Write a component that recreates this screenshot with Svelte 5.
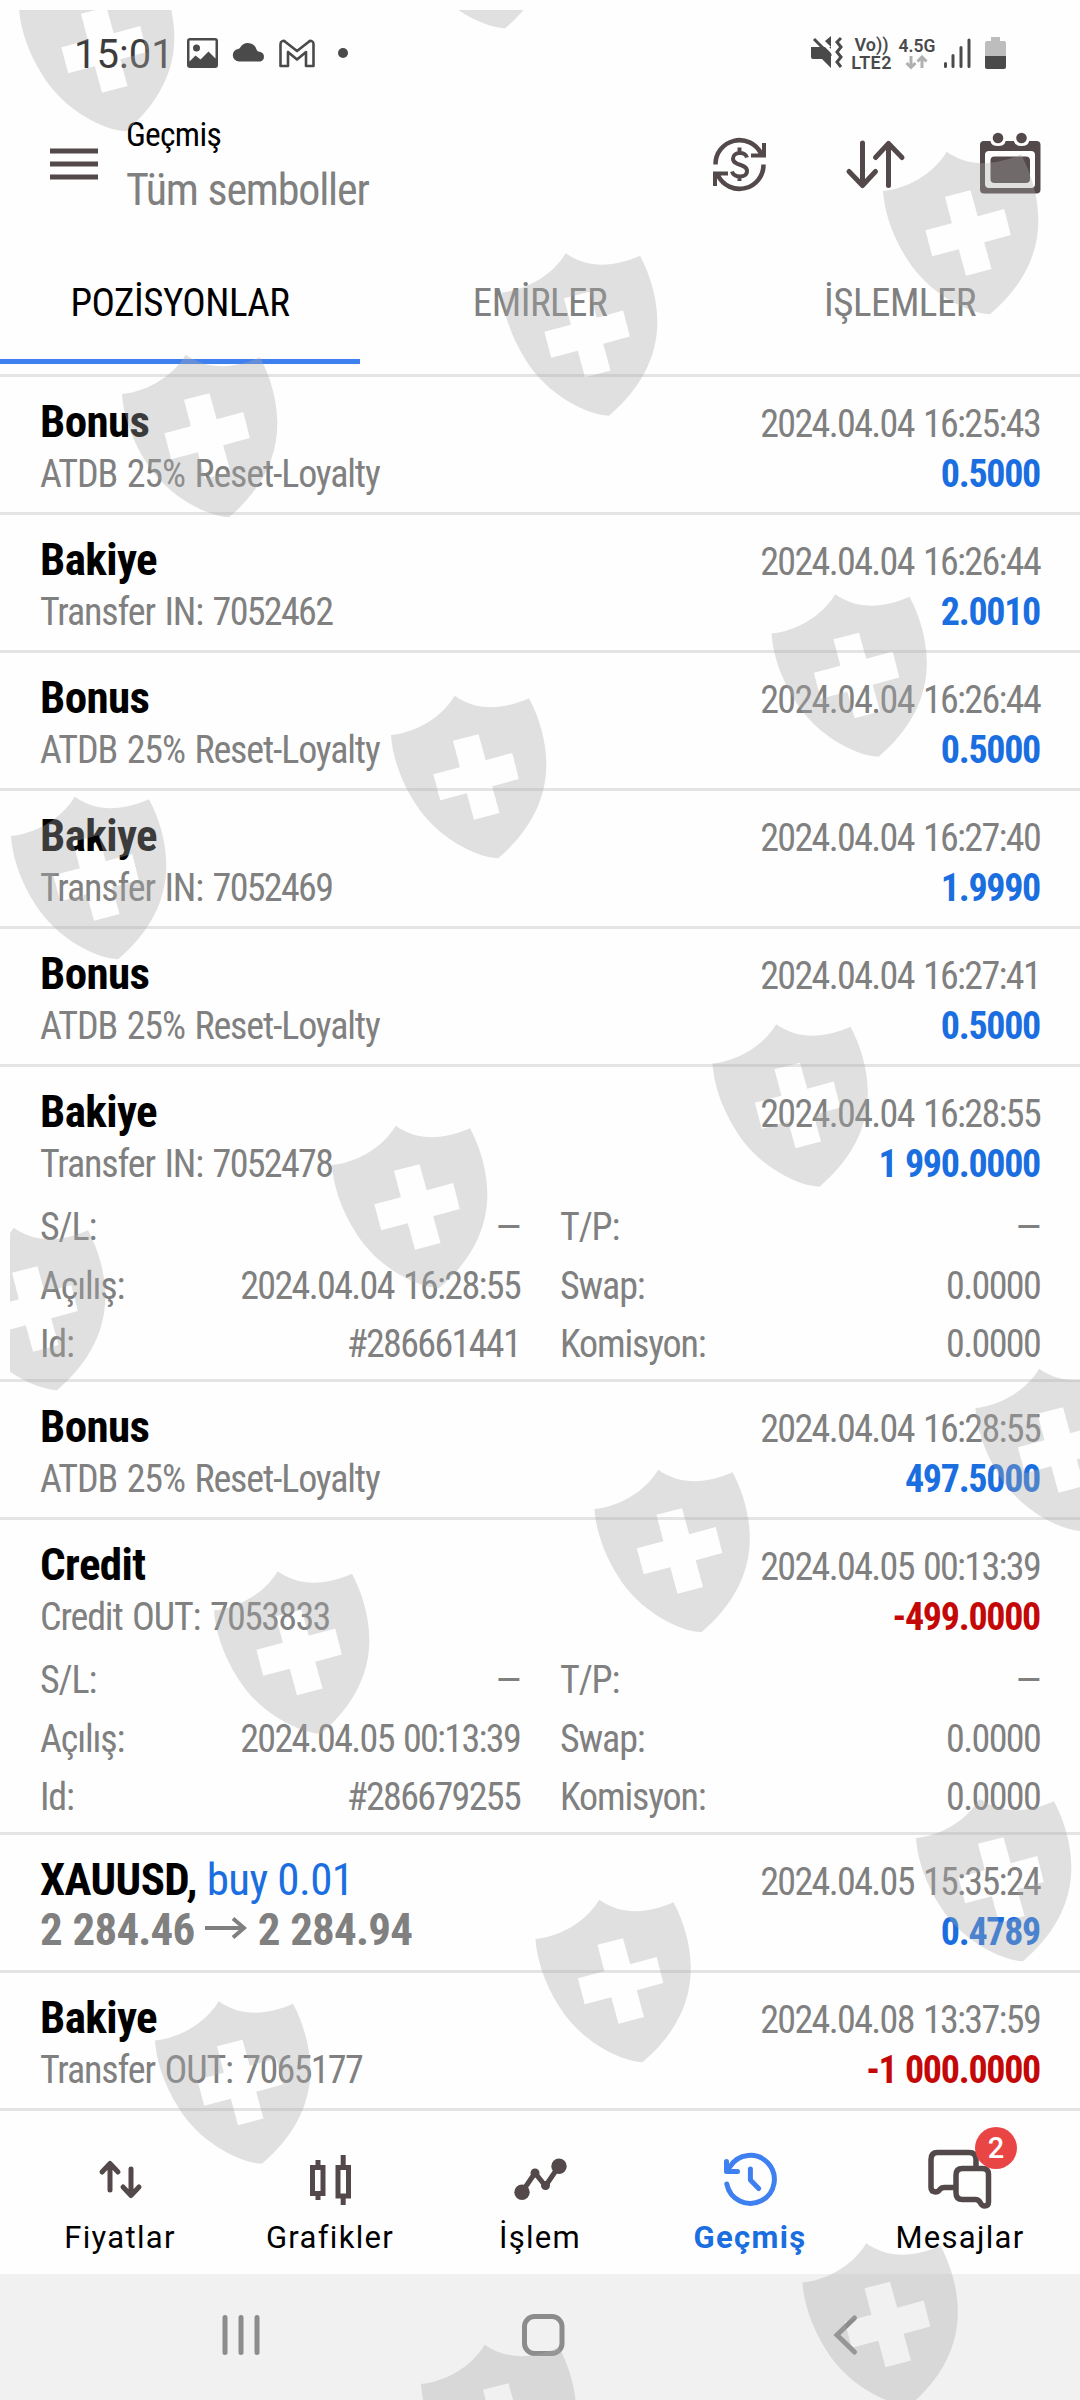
<script lang="ts">
  type Deal = {
    title: string;
    side?: string;
    note?: string;
    ref?: string;
    from?: string;
    to?: string;
    time: string;
    profit: string;
    id?: string;
  };

  const tabs = ["POZİSYONLAR", "EMİRLER", "İŞLEMLER"];
  const activeTab = 0;

  const deals: Deal[] = [
    { title: "Bonus", note: "ATDB 25% Reset-Loyalty", time: "2024.04.04 16:25:43", profit: "0.5000" },
    { title: "Bakiye", note: "Transfer IN:", ref: "7052462", time: "2024.04.04 16:26:44", profit: "2.0010" },
    { title: "Bonus", note: "ATDB 25% Reset-Loyalty", time: "2024.04.04 16:26:44", profit: "0.5000" },
    { title: "Bakiye", note: "Transfer IN:", ref: "7052469", time: "2024.04.04 16:27:40", profit: "1.9990" },
    { title: "Bonus", note: "ATDB 25% Reset-Loyalty", time: "2024.04.04 16:27:41", profit: "0.5000" },
    { title: "Bakiye", note: "Transfer IN:", ref: "7052478", time: "2024.04.04 16:28:55", profit: "1 990.0000", id: "#286661441" },
    { title: "Bonus", note: "ATDB 25% Reset-Loyalty", time: "2024.04.04 16:28:55", profit: "497.5000" },
    { title: "Credit", note: "Credit OUT:", ref: "7053833", time: "2024.04.05 00:13:39", profit: "-499.0000", id: "#286679255" },
    { title: "XAUUSD,", side: "buy 0.01", from: "2 284.46", to: "2 284.94", time: "2024.04.05 15:35:24", profit: "0.4789" },
    { title: "Bakiye", note: "Transfer OUT:", ref: "7065177", time: "2024.04.08 13:37:59", profit: "-1 000.0000" },
  ];

  // left corner of every shield
  const shields = [
    [19, 8], [398, -95],
    [122, 394], [502, 292.5], [883, 191],
    [11, 836], [391, 735], [771.5, 633.5],
    [-50, 1267], [332, 1165], [712.5, 1063.5],
    [214, 1610.5], [594.5, 1509], [975.5, 1408],
    [155, 2040.5], [535.5, 1939], [916, 1838],
    [421, 2384], [802.5, 2282.5],
  ];
</script>

<div class="screen">
  <div class="status">
    <span class="clock">15:01</span>
    <svg class="left-icons" width="170" height="40" viewBox="184 33 170 40">
      <path fill="#4a4a4a" fill-rule="evenodd" d="M190 38h25a3 3 0 0 1 3 3v24a3 3 0 0 1-3 3h-25a3 3 0 0 1-3-3v-24a3 3 0 0 1 3-3zM189.500 40.500v21l6-6 5 4 8-8 7 7v-18zM196.500 44.500a3.500 3.500 0 1 1 0 7 3.500 3.500 0 0 1 0-7z" />
      <path fill="#4a4a4a" d="M239 61.500a6.300 6.300 0 0 1-1-12.500c2-1 1.500 0 2.500-2a9 9 0 0 1 16 2.500c2 3 1 1.500 4 2.500a5 5 0 0 1 0 9.500z" />
      <path fill="none" stroke="#4a4a4a" stroke-width="2.600" stroke-linejoin="round" d="M280.500 66V44c0-3 3-4 5-2l11.500 9 11.500-9c2-2 5-1 5 2v22h-7.500V52l-9 7.500-9-7.500v14z" />
      <circle cx="343" cy="53" r="5" fill="#4a4a4a" />
    </svg>
    <div class="status-right">
      <svg width="34" height="36" viewBox="811 35 34 36">
        <path fill="#4a4a4a" d="M812 47h7l13 0v21l-9-9h-9q-2 0-2-2zM826 41l6-5v11z" />
        <path fill="none" stroke="#fefefe" stroke-width="3" d="M818 37l15 15" />
        <path fill="none" stroke="#4a4a4a" stroke-width="3" d="M815 39l17 17M842 38l-4 4 4 5-4 5 4 5-4 5 4 5" />
      </svg>
      <div class="volte"><span>Vo))</span><span>LTE2</span></div>
      <div class="net">
        <span>4.5G</span>
        <svg width="26" height="15" viewBox="905 56 26 15">
          <path fill="none" stroke="#b0b0b0" stroke-width="3" d="M912 57v11M907.500 64l4.500 4.500 4.500-4.500M923 69V59M918.500 62.500l4.500-4.500 4.500 4.500" />
        </svg>
      </div>
      <svg width="66" height="36" viewBox="942 35 66 36">
        <path stroke="#4a4a4a" stroke-width="3" stroke-linecap="round" d="M945.500 66.500v-3M953 66.500v-11M961 66.500v-19M969 66.500V40" />
        <path fill="#bdbdbd" d="M991 41v-4h9v4h4a2 2 0 0 1 2 2v13h-21V43a2 2 0 0 1 2-2z" />
        <path fill="#4a4a4a" d="M985 56h21v11a2 2 0 0 1-2 2h-17a2 2 0 0 1-2-2z" />
      </svg>
    </div>
  </div>

  <header>
    <svg class="menu" width="48" height="34" viewBox="0 0 48 34">
      <path stroke="#54494a" stroke-width="5" d="M0 4h48M0 17h48M0 30h48" />
    </svg>
    <div class="heading">
      <h1>Geçmiş</h1>
      <p>Tüm semboller</p>
    </div>
    <svg class="actions" width="332" height="66" viewBox="712 130 332 66">
      <g fill="none" stroke="#54494a" stroke-width="5">
        <path stroke-width="4.500" d="M715.500 164.500a24 24 0 0 1 45.500-11M763.500 164.500a24 24 0 0 1-45.500 11" />
        <path stroke-width="4" d="M764 143v12.500h-13M715 186v-12.500h13" />
        <path stroke-width="4" d="M747 157.500c-1.500-6.500-14-6-14 1 0 8 14 4.500 14 12.500 0 7.500-13.500 7-15 .5M739.500 147.500v5M739.500 176v5" />
        <path stroke-linecap="round" stroke-linejoin="round" d="M862.500 143v42M849 171.500l13.500 14 13-14M888.500 185.500v-42M875.500 157.500l13-14 13.500 14" />
      </g>
      <path fill="#54494a" d="M764 149v8h-8zM715 181v-8h8z" />
      <path fill="#54494a" fill-rule="evenodd" d="M984 141h52.500a4 4 0 0 1 4 4v44.500a4 4 0 0 1-4 4h-52.500a4 4 0 0 1-4-4V145a4 4 0 0 1 4-4zM989 151a4 4 0 0 0-4 4v29a4 4 0 0 0 4 4h42a4 4 0 0 0 4-4v-29a4 4 0 0 0-4-4z" />
      <rect x="990.500" y="156.500" width="39.500" height="26.500" rx="4" fill="#54494a" />
      <path fill="#fefefe" d="M990.500 138h15v3.500q-1 4.500-7.500 4.500t-7.500-4.500zM1014 138h15v3.500q-1 4.500-7.500 4.500t-7.500-4.500z" />
      <circle cx="998" cy="138" r="5.300" fill="#54494a" />
      <circle cx="1021.500" cy="138" r="5.300" fill="#54494a" />
    </svg>
  </header>

  <nav class="tabs">
    {#each tabs as tab, i}
      <div class="tab" class:active={i === activeTab}>{tab}</div>
    {/each}
  </nav>

  <main>
    {#each deals as deal}
      <section class="deal">
        <div class="line first">
          <span class="title">{deal.title}{#if deal.side}{" "}<span class="side">{deal.side}</span>{/if}</span>
          <span class="gray num">{deal.time}</span>
        </div>
        <div class="line second">
          {#if deal.from}
            <span class="price">
              {deal.from}
              <svg width="42" height="22" viewBox="0 0 42 22">
                <path fill="none" stroke="#808080" stroke-width="4" d="M0 11h39M28 1.500l11 9.500-11 9.500" />
              </svg>
              {deal.to}
            </span>
          {:else}
            <span class="gray">{deal.note}{#if deal.ref}{" "}<span class="num">{deal.ref}</span>{/if}</span>
          {/if}
          <span class="profit" class:loss={deal.profit.startsWith("-")}>{deal.profit}</span>
        </div>
        {#if deal.id}
          <div class="details">
            <div><span>S/L:</span><span>—</span></div>
            <div><span>T/P:</span><span>—</span></div>
            <div><span>Açılış:</span><span class="num">{deal.time}</span></div>
            <div><span>Swap:</span><span class="num">0.0000</span></div>
            <div><span>Id:</span><span class="num">{deal.id}</span></div>
            <div><span>Komisyon:</span><span class="num">0.0000</span></div>
          </div>
        {/if}
      </section>
    {/each}
  </main>

  <nav class="bottom">
    <div class="item">
      <svg width="80" height="64" viewBox="80 2148 80 64">
        <path fill="none" stroke="#54494a" stroke-width="5" stroke-linecap="round" stroke-linejoin="round" d="M110 2190v-26M102 2172l8-8.500 8 8.500M131 2169v26M123 2187l8 8.500 8-8.500" />
      </svg>
      <span>Fiyatlar</span>
    </div>
    <div class="item">
      <svg width="80" height="64" viewBox="290 2148 80 64">
        <path fill="none" stroke="#54494a" stroke-width="5" d="M312.500 2167.500h10.500v26h-10.500zM338 2167.500h10.500v28.500h-10.500zM318 2160v7M318 2194v6M343.200 2155v12M343.200 2196v9" />
      </svg>
      <span>Grafikler</span>
    </div>
    <div class="item">
      <svg width="80" height="64" viewBox="500 2148 80 64">
        <path fill="none" stroke="#54494a" stroke-width="5" d="M522 2192l13-19 10.500 13 13.500-20" />
        <g fill="#54494a">
          <circle cx="522" cy="2192.300" r="7.700" />
          <circle cx="535" cy="2173" r="4.500" />
          <circle cx="545.500" cy="2185.500" r="4.500" />
          <circle cx="559" cy="2166.300" r="7.700" />
        </g>
      </svg>
      <span>İşlem</span>
    </div>
    <div class="item current">
      <svg width="80" height="64" viewBox="710 2148 80 64">
        <g fill="none" stroke="#3f80f0" stroke-width="5" stroke-linecap="round" stroke-linejoin="round">
          <path d="M726.800 2184a24 24 0 1 0 3-17" />
          <path d="M726.500 2161.500v10h11M750.400 2169v11l8.300 8.500" />
        </g>
      </svg>
      <span>Geçmiş</span>
    </div>
    <div class="item">
      <svg width="80" height="64" viewBox="920 2148 80 64">
        <g fill="none" stroke="#54494a" stroke-width="5.500" stroke-linejoin="round">
          <path d="M976 2168v-8.500q0-7-7-7h-31.500q-6.500 0-6.500 7v28q0 4 4.500 4.500c5 0 3-4.500 9-4.500h10" />
          <path d="M962.500 2168.500h20q6 0 6 6v27.500q0 4-4 4c-5 0-3-6.500-9-6.500h-13q-6.500 0-6.500-6.500v-18q0-6.500 6.500-6.500z" />
        </g>
      </svg>
      <span>Mesajlar</span>
      <b class="badge">2</b>
    </div>
  </nav>

  <div class="system">
    <svg width="640" height="44" viewBox="220 2313 640 44">
      <g fill="none" stroke="#8c8c8c" stroke-width="5" stroke-linecap="round">
        <path d="M225 2317.500v35M241 2317.500v35M257 2317.500v35" />
        <rect x="524.500" y="2316.500" width="37.500" height="37" rx="10" />
        <path d="M854.500 2318l-17.500 17 17.500 17" />
      </g>
    </svg>
  </div>

  <svg class="shields" width="1070" height="2390" viewBox="10 10 1070 2390">
    {#each shields as [x, y]}
      <path
        transform="translate({x} {y})"
        fill-rule="evenodd"
        d="M0 0C22-2 50-16 63.700-39.300 85-24 112-25 138-36.700 148-18 155 5 155.300 28 155.800 65 138 97 107 123.300 84 122 45 102 24 68 8 43 1 18 0 0zM62 5.700 87.500-.7 94.700 25.300 121.200 18 127.800 44 101.200 51.300 108.500 78 83 84.700 75.800 58.300 49.200 65.300 42.400 39.300 68.900 32.300z"
      />
    {/each}
  </svg>
</div>

<style>
  :global(body) {
    margin: 0;
    background: #fefefe;
  }

  .screen {
    position: relative;
    display: flex;
    flex-direction: column;
    width: 1080px;
    height: 2400px;
    overflow: hidden;
    background: #fefefe;
    font-family: "Roboto Condensed", Roboto, sans-serif;
    font-stretch: 75%;
    font-size: 38px;
    color: #000;
  }

  svg {
    display: block;
    flex: none;
  }

  .status {
    display: flex;
    align-items: center;
    box-sizing: border-box;
    height: 106px;
    padding: 0 72px 0 74px;
  }

  .clock {
    width: 110px;
    font-family: Roboto, sans-serif;
    font-stretch: 100%;
    font-size: 40px;
    font-weight: 380;
    line-height: 46px;
    color: #3c3c3c;
    padding-top: 4px;
  }

  .status-right {
    display: flex;
    align-items: center;
    margin-left: auto;
    color: #4a4a4a;
    font-family: Roboto, sans-serif;
    font-stretch: 95%;
    font-size: 18px;
    font-weight: 600;
  }

  .volte,
  .net {
    display: flex;
    flex-direction: column;
    align-items: center;
    line-height: 18px;
    padding-top: 1px;
  }

  .volte {
    width: 55px;
  }

  .volte span + span {
    letter-spacing: 0.4px;
  }

  .net {
    width: 36px;
    margin-right: 7px;
    font-size: 17.5px;
  }

  header {
    display: flex;
    align-items: center;
    height: 122px;
    padding: 0 36px 0 50px;
  }

  .menu {
    margin: 0 28px 6px 0;
  }

  .heading {
    flex: 1;
    margin-bottom: 6px;
  }

  .actions {
    margin-bottom: 8px;
  }

  h1,
  p {
    margin: 0;
    font-weight: 400;
  }

  h1 {
    font-size: 33.5px;
    line-height: 52px;
    letter-spacing: -0.7px;
  }

  p {
    font-size: 44px;
    line-height: 58px;
    letter-spacing: -1.2px;
    word-spacing: 1px;
    color: #808080;
  }

  .tabs {
    display: flex;
    height: 146px;
    border-bottom: 3px solid #e4e4e4;
  }

  .tab {
    flex: 1;
    box-sizing: border-box;
    height: 136px;
    line-height: 151px;
    font-size: 39px;
    letter-spacing: -0.5px;
    text-align: center;
    color: #808080;
  }

  .tab.active {
    color: #000;
    border-bottom: 5px solid #3f80f0;
  }

  .deal {
    padding: 20px 40px 16px;
    border-bottom: 3px solid #e4e4e4;
    letter-spacing: -1.15px;
    word-spacing: 2px;
  }

  .line {
    display: flex;
    justify-content: space-between;
    align-items: baseline;
    white-space: nowrap;
  }

  .first {
    height: 50px;
    line-height: 50px;
    margin-bottom: 5px;
  }

  .second {
    height: 44px;
    line-height: 44px;
  }

  .gray {
    color: #808080;
  }

  .num {
    letter-spacing: -1.65px;
  }

  .title {
    font-size: 45px;
    font-weight: 700;
    letter-spacing: -0.6px;
    word-spacing: 0;
  }

  .side {
    font-weight: 400;
    color: #1a6ee0;
  }

  .price {
    font-size: 45px;
    font-weight: 700;
    line-height: 39px;
    letter-spacing: -0.8px;
    word-spacing: 1px;
    color: #808080;
  }

  .price svg {
    display: inline-block;
    vertical-align: 6px;
  }

  .profit {
    font-weight: 700;
    letter-spacing: -1.3px;
    word-spacing: 1px;
    color: #1a6ee0;
  }

  .profit.loss {
    color: #c40808;
  }

  .details {
    display: grid;
    grid-template-columns: 1fr 1fr;
    column-gap: 40px;
    margin: 12px 0 -10.5px;
    line-height: 58.5px;
    color: #808080;
  }

  .details div {
    display: flex;
    justify-content: space-between;
  }

  .bottom {
    display: flex;
    height: 163px;
    padding: 0 15px;
    font-family: Roboto, sans-serif;
  }

  .item {
    position: relative;
    display: flex;
    flex: 1;
    flex-direction: column;
    align-items: center;
    padding-top: 37px;
    font-size: 31px;
    line-height: 52px;
    letter-spacing: 1.3px;
    font-stretch: 90%;
  }

  .current {
    font-weight: 700;
    color: #1a6ee0;
  }

  .badge {
    position: absolute;
    top: 16px;
    left: 120px;
    width: 42px;
    height: 42px;
    border-radius: 50%;
    background: #ea4545;
    color: #fff;
    font-size: 29px;
    font-weight: 500;
    line-height: 42px;
    letter-spacing: 0;
    text-align: center;
  }

  .system {
    display: flex;
    flex: 1;
    align-items: flex-start;
    padding: 39px 220px 0;
    background: #f1f1f1;
  }

  .shields {
    position: absolute;
    top: 10px;
    left: 10px;
    fill: rgba(168, 168, 168, 0.35);
    pointer-events: none;
  }
</style>
